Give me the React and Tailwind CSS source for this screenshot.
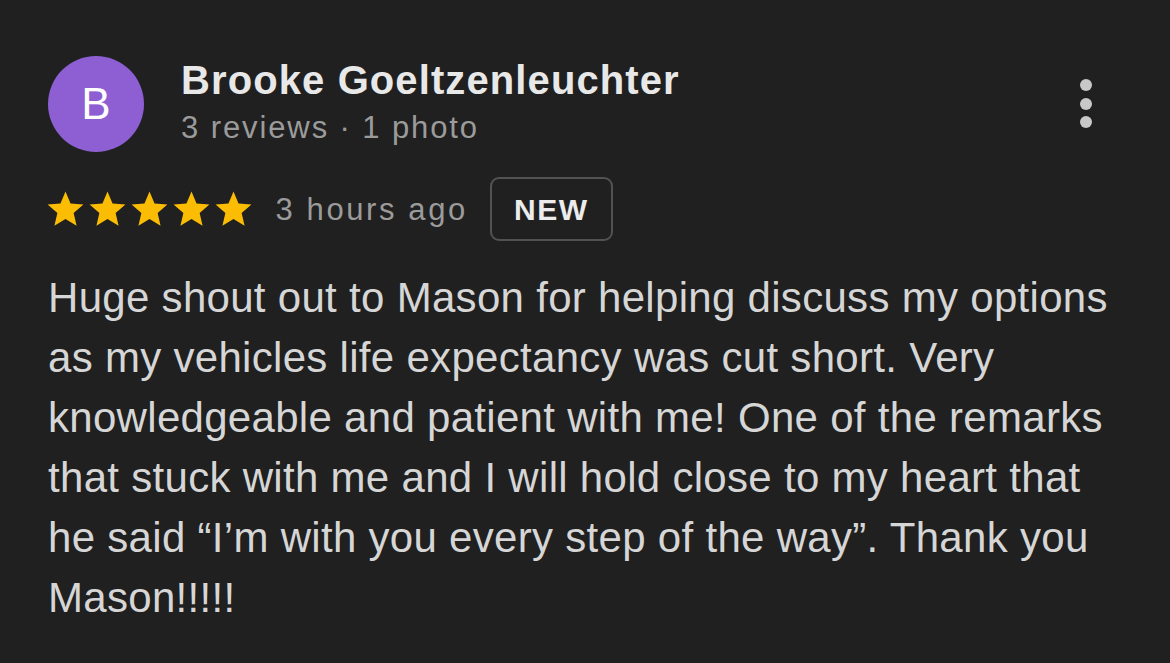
import React from 'react';

const Star = () => (
  <svg viewBox="0 0 24 24" className="w-[43px] h-[43px] -mx-[0.5px] shrink-0" fill="#fbbc04">
    <path d="M12 17.27L18.18 21l-1.64-7.03L22 9.24l-7.19-.61L12 2 9.19 8.63 2 9.24l5.46 4.73L5.82 21z" />
  </svg>
);

const App = () => {
  return (
    <div className="w-[1170px] h-[663px] bg-[#202020] overflow-hidden font-['Liberation_Sans',Arial,sans-serif]">
      <div className="pl-[48px] pt-[56px]">
        {/* header */}
        <div className="flex items-start">
          <div className="w-[96px] h-[96px] rounded-full bg-[#8d5fd3] flex items-center justify-center text-white text-[44px] leading-none shrink-0">
            B
          </div>
          <div className="ml-[37px] flex-1">
            <div className="text-[#e8e8e8] text-[40px] font-bold leading-[48px] tracking-[1.1px]">Brooke Goeltzenleuchter</div>
            <div className="text-[#9b9b9b] text-[31px] leading-[48px] tracking-[1.9px]">3 reviews · 1 photo</div>
          </div>
          <div className="flex flex-col gap-[6.5px] pt-[23px] pr-[78px]">
            <span className="w-[12px] h-[12px] rounded-full bg-[#c8c8c8]" />
            <span className="w-[12px] h-[12px] rounded-full bg-[#c8c8c8]" />
            <span className="w-[12px] h-[12px] rounded-full bg-[#c8c8c8]" />
          </div>
        </div>

        {/* rating row */}
        <div className="flex items-center mt-[25px]">
          <div className="flex -ml-[3.5px]">
            <Star /><Star /><Star /><Star /><Star />
          </div>
          <span className="ml-[21px] text-[#9b9b9b] text-[31px] tracking-[2.6px] pt-[3px]">3 hours ago</span>
          <span className="ml-[22px] h-[64px] w-[123px] border-2 border-[#525252] rounded-[9px] flex items-center justify-center text-[#ececec] text-[30px] font-bold tracking-[1.5px]">
            NEW
          </span>
        </div>

        <p className="mt-[27px] w-[1090px] text-[#d6d6d6] text-[42px] leading-[60px] tracking-[0.3px]">
          Huge shout out to Mason for helping discuss my options as my vehicles life expectancy was cut short. Very knowledgeable and patient with me! One of the remarks that stuck with me and I will hold close to my heart that he said “I’m with you every step of the way”. Thank you Mason!!!!!
        </p>
      </div>
    </div>
  );
};

export default App;
